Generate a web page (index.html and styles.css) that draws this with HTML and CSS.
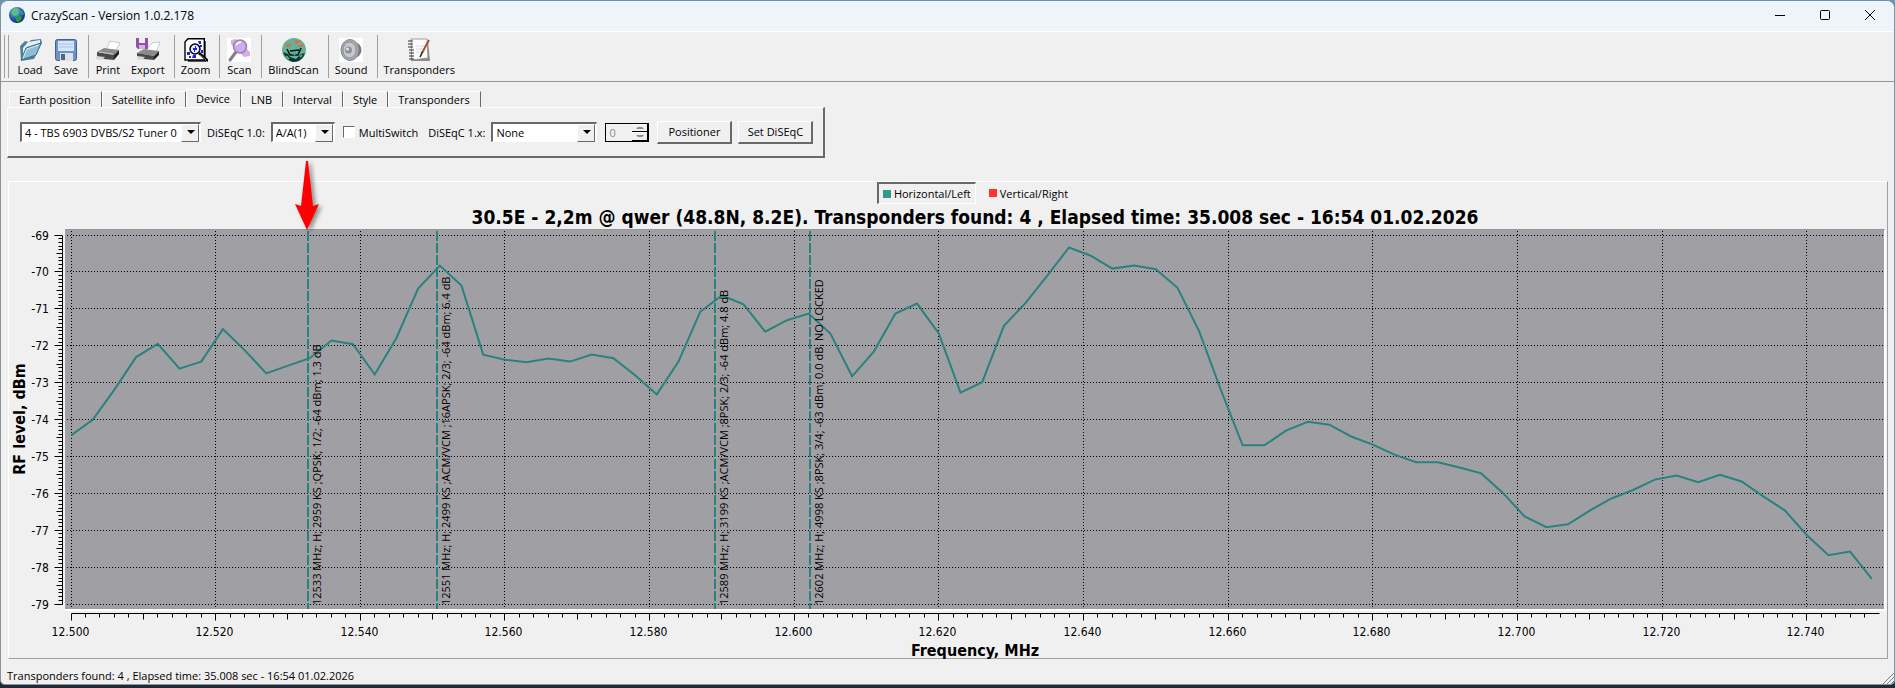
FILE: index.html
```html
<!DOCTYPE html>
<html lang="en">
<head>
    <meta charset="UTF-8">
    <meta name="viewport" content="width=device-width, initial-scale=1.0">
    <title>CrazyScan - Version 1.0.2.178</title>
    <link rel="stylesheet" href="styles.css">
</head>
<body>
<div class="window">
    <header class="titlebar">
        <svg class="app-icon" viewBox="0 0 16 16">
            <defs>
                <radialGradient id="globe" cx="0.4" cy="0.3" r="0.8">
                    <stop offset="0" stop-color="#7fd0ff"/>
                    <stop offset="0.5" stop-color="#2b62b8"/>
                    <stop offset="1" stop-color="#0a1f55"/>
                </radialGradient>
            </defs>
            <circle cx="8" cy="8" r="8" fill="url(#globe)"/>
            <path d="M2 5 Q4 1 8 1 L10 3 L8 5 L9 7 L6 9 L4 8 Z" fill="#5cc46a"/>
            <path d="M7 10 L11 9 L13 11 L10 15 L7 14 Z" fill="#2e9a3c"/>
            <path d="M12 3 L15 7 L13 8 L11 5 Z" fill="#3aa548"/>
        </svg>
        <span class="app-title">CrazyScan - Version 1.0.2.178</span>
        <div class="window-buttons">
            <button aria-label="Minimize"><svg viewBox="0 0 10 10"><path d="M0 5.5 H10"/></svg></button>
            <button aria-label="Maximize"><svg viewBox="0 0 10 10"><rect x="0.5" y="0.5" width="9" height="9" rx="1"/></svg></button>
            <button aria-label="Close"><svg viewBox="0 0 10 10"><path d="M0 0 L10 10 M10 0 L0 10"/></svg></button>
        </div>
    </header>

    <nav class="toolbar">
        <span class="grip"></span>
        <button>
            <svg viewBox="0 0 24 24">
                <path d="M2 8 L7 3 L11 4 L13 2 L23 1 L24 5 L16 21 L3 23 Z" fill="#4f8199"/>
                <path d="M5 10 L10 4 L22 2 L22 5 L9 9 L5 20 Z" fill="#e3f1f6"/>
                <path d="M3 22 L8 10 L23 5 L18 17 Z" fill="#8fbdd3" stroke="#3f7189"/>
                <path d="M5 20 L9 11 L21 7" fill="none" stroke="#d7ebf3"/>
            </svg>
            Load
        </button>
        <button>
            <svg viewBox="0 0 24 24">
                <rect x="1.5" y="1.5" width="21" height="21" rx="2" fill="#6a92cc" stroke="#4a5f86"/>
                <rect x="4" y="3" width="16" height="10" fill="#d6e6f8"/>
                <path d="M5 6 H19 M5 9 H19" stroke="#a9c4e6"/>
                <rect x="6" y="15" width="13" height="8" fill="#dfe3e8"/>
                <rect x="7" y="16" width="4" height="6" fill="#56657c"/>
            </svg>
            Save
        </button>
        <span class="separator"></span>
        <button>
            <svg viewBox="0 0 24 24">
                <path d="M10 12 L14 3 L24 5 L19 14 Z" fill="#fff" stroke="#aaa" stroke-width="0.6"/>
                <path d="M1 14 L8 10 L23 12 L18 17 Z" fill="#8b8b8b"/>
                <path d="M1 14 L18 17 L18 22 L8 21 L1 18 Z" fill="#4a4a4a"/>
                <path d="M18 17 L23 12 L23 16 L18 22 Z" fill="#222"/>
                <path d="M0 18 L9 19 L6 22 L0 21 Z" fill="#d5d9dc"/>
                <path d="M3 14 L17 16" stroke="#c9c9c9"/>
            </svg>
            Print
        </button>
        <button>
            <svg viewBox="0 0 24 24">
                <path d="M10 12 L16 5 L24 4 L20 14 Z" fill="#fff" stroke="#aaa" stroke-width="0.6"/>
                <path d="M1 15 L8 11 L23 13 L18 18 Z" fill="#8b8b8b"/>
                <path d="M1 15 L18 18 L18 22 L8 21 L1 19 Z" fill="#4a4a4a"/>
                <path d="M18 18 L23 13 L23 17 L18 22 Z" fill="#222"/>
                <path d="M1 18 L9 19 L6 22 L1 21 Z" fill="#d5d9dc"/>
                <path d="M0 0 H12 V11 H2 L0 9 Z" fill="#9350a8"/>
                <rect x="3" y="0" width="6" height="5" fill="#f4eaf8"/>
                <rect x="3" y="7" width="6" height="4" fill="#d3b4de"/>
            </svg>
            Export
        </button>
        <span class="separator"></span>
        <button>
            <svg viewBox="0 0 24 24">
                <path d="M4 3 H22 V24 H4 Z" fill="#555"/>
                <path d="M4 0.7 H20.3 V22 H1 V4 Z" fill="#fff" stroke="#000" stroke-width="1.4"/>
                <path d="M14 3 h3 v3 h-2 z M3 14 h3 v3 h-3 z M9 17 h3 v3 h-4 z M17 12 h2 v3 h-2 z M16 7 h2 v2 h-2 z M5 18 h2 v2 h-2 z" fill="#1d1df0"/>
                <circle cx="11" cy="11" r="5" fill="#e4ecff" stroke="#000" stroke-width="1.5"/>
                <path d="M9 10 h2 v-2 h1 v2 h1 v2 h-2 v2 h-1 v-2 h-1 z" fill="#1d1df0"/>
                <path d="M15 15 L24 23" stroke="#000" stroke-width="2.6"/>
                <path d="M16 17 L22 22" stroke="#999" stroke-width="0.8"/>
            </svg>
            Zoom
        </button>
        <span class="separator"></span>
        <button>
            <svg viewBox="0 0 24 24">
                <rect width="24" height="24" fill="#fff"/>
                <path d="M4 2 L9 1 L23 14 L23 18 L17 19 L4 6 Z" fill="#d9a9ec"/>
                <path d="M3 22 L9 14" stroke="#8b7890" stroke-width="3" stroke-linecap="round"/>
                <circle cx="13" cy="8.5" r="6.5" fill="#cfaaf0" stroke="#8f8c9c" stroke-width="1.6"/>
                <path d="M9 7 Q11 4 14 4" stroke="#fff" fill="none" stroke-width="1.4"/>
            </svg>
            Scan
        </button>
        <span class="separator"></span>
        <button>
            <svg viewBox="0 0 24 24">
                <circle cx="12" cy="12" r="12" fill="#63b39b"/>
                <path d="M1 14 Q4 22 11 24 Q20 24 23 15 L19 16 L14 21 L8 19 L6 16 Z" fill="#14332f"/>
                <path d="M3 7 L10 5 L8 8 L5 9 Z M12 3 L19 2 L17 5 L14 6 Z M14 8 L22 6 L20 9 Z" fill="#e06a42"/>
                <path d="M5 11 L8 17 H16 L19 10 M8 13 L17 12" stroke="#071412" stroke-width="1.6" fill="none"/>
                <path d="M10 15 L14 14 L13 18 Z" fill="#3fa9c9"/>
                <path d="M4 18 L7 21 M18 19 L20 17" stroke="#6fd06b" stroke-width="1.4"/>
            </svg>
            BlindScan
        </button>
        <span class="separator"></span>
        <button>
            <svg viewBox="0 0 24 24">
                <rect width="24" height="24" fill="#fff"/>
                <path d="M13 3 L20 6 Q25 12 20 18 L13 21 Z" fill="#77797d"/>
                <ellipse cx="11" cy="12" rx="9" ry="10.5" fill="#a5a8ad" stroke="#85878b"/>
                <ellipse cx="10.5" cy="12" rx="6.5" ry="8" fill="#c6c9cd" stroke="#8e9196"/>
                <circle cx="9.5" cy="12" r="3.5" fill="#8f9297"/>
                <circle cx="8.5" cy="11" r="1.5" fill="#e2e4e6"/>
            </svg>
            Sound
        </button>
        <span class="separator"></span>
        <button>
            <svg viewBox="0 0 24 24">
                <path d="M5 1 L21 3 L23 23 L4 23 Z" fill="#8b8b8b"/>
                <path d="M4 1 L20 1 L21 20 L5 22 Z" fill="#fbfbfb" stroke="#8a8a8a" stroke-width="0.8"/>
                <path d="M1 3 H6 M1 6 H6 M1 9 H6 M2 12 H7 M2 15 H7 M2 18 H7 M2 21 H7" stroke="#333" stroke-width="1.2"/>
                <path d="M9 8 H18 M9 11 H18 M9 14 H18" stroke="#dcdcdc"/>
                <path d="M22 2 L15 15" stroke="#a3542f" stroke-width="2"/>
                <path d="M15.5 14 L13 19" stroke="#222" stroke-width="1.6"/>
            </svg>
            Transponders
        </button>
    </nav>

    <section class="settings">
        <div class="tabs" role="tablist">
            <button role="tab">Earth position</button>
            <button role="tab">Satellite info</button>
            <button role="tab" aria-selected="true" class="active">Device</button>
            <button role="tab">LNB</button>
            <button role="tab">Interval</button>
            <button role="tab">Style</button>
            <button role="tab">Transponders</button>
        </div>
        <div class="tab-page" role="tabpanel">
            <span class="combo combo-tuner">
                <select aria-label="Tuner"><option>4 - TBS 6903 DVBS/S2 Tuner 0</option></select>
            </span>
            <label for="diseqc10">DiSEqC 1.0:</label>
            <span class="combo combo-port">
                <select id="diseqc10"><option>A/A(1)</option></select>
            </span>
            <label class="check"><input type="checkbox"> MultiSwitch</label>
            <label for="diseqc1x">DiSEqC 1.x:</label>
            <span class="combo combo-type">
                <select id="diseqc1x"><option>None</option></select>
            </span>
            <span class="spin">
                <input type="text" value="0" aria-label="Position" disabled>
                <span class="spin-buttons">
                    <button aria-label="Up" disabled></button>
                    <button aria-label="Down" disabled></button>
                </span>
            </span>
            <button class="push">Positioner</button>
            <button class="push">Set DiSEqC</button>
        </div>
    </section>

    <main class="chart">
        <div class="legend">
            <button class="pressed"><i class="swatch left"></i>Horizontal/Left</button>
            <button><i class="swatch right"></i>Vertical/Right</button>
        </div>
        <h1>30.5E - 2,2m @ qwer (48.8N, 8.2E). Transponders found: 4 , Elapsed time: 35.008 sec - 16:54 01.02.2026</h1>
        <div class="plot">
            <svg id="plot"></svg>
        </div>
    </main>

    <footer class="statusbar">
        <span>Transponders found: 4 , Elapsed time: 35.008 sec - 16:54 01.02.2026</span>
        <svg class="size-grip" viewBox="0 0 12 12"><path d="M1 12 L12 1 M5 12 L12 5 M9 12 L12 9"/></svg>
    </footer>
</div>
<script src="plot.js"></script>
</body>
</html>
```
FILE: styles.css
```css
* {
    box-sizing: border-box;
}
html, body {
    height: 100%;
}
body {
    margin: 0;
    padding-bottom: 3px;
    background: linear-gradient(to bottom, #6f93b0, #4d7a8c 60%, #1d2b36 98%);
    font-family: "Open Sans", sans-serif;
    font-size: 11px;
    color: #000;
}
button, select, input {
    font: inherit;
    color: inherit;
}
button {
    border: 0;
    padding: 0;
    background: none;
}

.window {
    display: flex;
    flex-direction: column;
    height: 100%;
    border: 1px solid #8b9299;
    border-top-color: #6c8fab;
    border-radius: 8px 8px 5px 5px;
    background: #f0f0f0;
    overflow: hidden;
}

/* title bar */
.titlebar {
    display: flex;
    align-items: center;
    flex: none;
    height: 31px;
    padding: 0 2px 2px 8px;
    background: #eef5fa;
    border-bottom: 1px solid #fff;
    font-size: 12px;
}
.app-icon {
    width: 16px;
    height: 16px;
    margin-right: 6px;
}
.window-buttons {
    display: flex;
    margin-left: auto;
}
.window-buttons button {
    width: 45px;
    height: 28px;
}
.window-buttons svg {
    width: 10px;
    height: 10px;
    fill: none;
    stroke: #000;
    overflow: visible;
}

/* toolbar */
.toolbar {
    display: flex;
    flex: none;
    height: 50px;
    padding: 3px 0 3px 3px;
    border-bottom: 1px solid #919b9b;
}
.toolbar button {
    display: flex;
    flex-direction: column;
    align-items: center;
    min-width: 36px;
    padding: 3px 5px 0;
    line-height: 16px;
}
.toolbar button svg {
    width: 24px;
    height: 24px;
}
.grip {
    width: 5px;
    margin-right: 3px;
    border: 1px solid #a0a0a0;
    border-width: 0 1px;
}
.separator {
    width: 1px;
    margin: 0 1px 0 4px;
    background: #a0a0a0;
}

/* tabbed settings */
.settings {
    flex: none;
    align-self: flex-start;
    margin: 7px 0 0 6px;
}
.tabs {
    display: flex;
    align-items: flex-end;
    height: 18px;
    padding-left: 2px;
}
.tabs button {
    height: 16px;
    padding: 0 10px 0 9px;
    border-top: 1px solid #fff;
    border-left: 1px solid #fff;
    border-right: 1px solid #696969;
    line-height: 16px;
}
.tabs .active {
    height: 18px;
    line-height: 16px;
}
.tab-page {
    display: flex;
    align-items: center;
    height: 51px;
    padding: 0 10px 0 12px;
    border: 1px solid #fff;
    border-right: 2px solid #696969;
    border-bottom: 2px solid #696969;
}
.tab-page label {
    margin: 0 6px;
}
.combo {
    position: relative;
    height: 20px;
}
.combo select {
    appearance: none;
    width: 100%;
    height: 100%;
    padding: 0 3px;
    border: 2px solid #696969;
    border-right: 1px solid #fff;
    border-bottom: 1px solid #fff;
    border-radius: 0;
    background: #fff;
}
.combo::before {
    content: "";
    position: absolute;
    top: 2px;
    right: 2px;
    width: 16px;
    height: 16px;
    background: #f0f0f0;
    border: 1px solid #fff;
    border-right: 1px solid #696969;
    border-bottom: 1px solid #696969;
}
.combo::after {
    content: "";
    position: absolute;
    top: 8px;
    right: 6px;
    border: 4px solid transparent;
    border-top-color: #000;
    border-bottom: 0;
}
.combo-tuner {
    width: 181px;
}
.combo-port {
    width: 64px;
}
.combo-type {
    width: 106px;
}
.tab-page .check {
    display: flex;
    align-items: center;
    margin: 0 4px 0 8px;
}
.check input {
    appearance: none;
    width: 12px;
    height: 12px;
    margin: 0 4px 0 0;
    border: 1px solid #696969;
    border-right-color: #fff;
    border-bottom-color: #fff;
    background: #fff;
}
.spin {
    display: flex;
    width: 44px;
    height: 19px;
    margin: 0 8px;
    border: 1px solid #000;
    border-right: 2px solid #000;
}
.spin input {
    width: 26px;
    padding: 0 3px;
    border: 0;
    background: #f0f0f0;
    color: #8d8d8d;
}
.spin-buttons {
    display: flex;
    flex-direction: column;
    flex: 1;
}
.spin-buttons button {
    flex: 1;
    border-bottom: 1px solid #000;
    border-top: 1px solid #fff;
}
.spin-buttons button::before {
    content: "";
    display: block;
    width: 4px;
    margin: auto;
    border: 2px solid transparent;
    border-top: 0;
    border-bottom-color: #8d8d8d;
}
.spin-buttons button:last-child::before {
    border-top: 2px solid #8d8d8d;
    border-bottom: 0;
}
.push {
    width: 75px;
    height: 23px;
    border: 1px solid #fff;
    border-right: 2px solid #696969;
    border-bottom: 2px solid #696969;
}
.push + .push {
    margin-left: 6px;
}

/* spectrum */
.chart {
    display: flex;
    flex-direction: column;
    flex: 1;
    min-height: 0;
    margin: 23px 6px 0 7px;
    border: 1px solid #fff;
    border-right-color: #a0a0a0;
    border-bottom-color: #a0a0a0;
}
.legend {
    display: flex;
    justify-content: center;
    height: 22px;
    padding-left: 54px;
}
.legend button {
    display: flex;
    align-items: center;
    height: 22px;
    padding: 0 4px;
    border: 1px solid transparent;
}
.legend button + button {
    margin-left: 8px;
}
.legend .pressed {
    border: 2px solid #696969;
    border-right: 1px solid #fff;
    border-bottom: 1px solid #fff;
}
.swatch {
    width: 8px;
    height: 8px;
    margin-right: 3px;
}
.swatch.left {
    background: #339990;
}
.swatch.right {
    background: #fb3434;
}
h1 {
    height: 25px;
    margin: 0;
    padding-left: 54px;
    font-family: "DejaVu Sans Condensed", "DejaVu Sans", sans-serif;
    font-size: 19px;
    line-height: 26px;
    text-align: center;
    white-space: nowrap;
}
.plot {
    flex: 1;
    min-height: 0;
}
.plot svg {
    display: block;
    width: 100%;
    height: 100%;
    overflow: visible;
}
.plot text {
    font-family: "DejaVu Sans Condensed", "DejaVu Sans", sans-serif;
    font-size: 12px;
}
.plot .axis-title {
    font-size: 16px;
    font-weight: bold;
}
.plot .marker-label {
    font-family: "Open Sans", sans-serif;
    font-size: 11px;
}
.area {
    fill: #a09fa4;
}
.edge {
    stroke: #fff;
    stroke-width: 2;
}
.edge-dark {
    stroke: #969696;
}
.grid {
    stroke: #000;
    stroke-dasharray: 1 2;
}
.axis {
    stroke: #000;
}
.series {
    fill: none;
    stroke: #2a827f;
    stroke-width: 2;
}
.marker {
    stroke: #2a827f;
    stroke-width: 2;
    stroke-dasharray: 10 2;
}
.arrow {
    fill: #f00;
    filter: drop-shadow(3px 2px 2px rgba(0, 0, 0, 0.4));
}

.statusbar {
    display: flex;
    align-items: center;
    justify-content: space-between;
    flex: none;
    height: 25px;
    padding: 7px 0 0 6px;
}
.size-grip {
    align-self: flex-end;
    width: 12px;
    height: 12px;
    stroke: #808080;
}
```
FILE: plot.js
```js
// level in dBm, one sample every 3 MHz
const START = 12500;
const END = 12750;
const STEP = 3;
const levels = [
    -74.43, -74.01, -73.19, -72.31, -71.95, -72.62, -72.43, -71.55, -72.12, -72.75,
    -72.54, -72.34, -71.86, -71.96, -72.78, -71.79, -70.45, -69.83, -70.37, -72.24,
    -72.38, -72.45, -72.35, -72.43, -72.24, -72.34, -72.80, -73.32, -72.43, -71.08,
    -70.64, -70.88, -71.62, -71.31, -71.13, -71.67, -72.83, -72.16, -71.13, -70.86,
    -71.67, -73.27, -72.99, -71.46, -70.84, -70.10, -69.34, -69.56, -69.91, -69.83,
    -69.93, -70.43, -71.61, -73.20, -74.70, -74.70, -74.30, -74.06, -74.14, -74.46,
    -74.68, -74.95, -75.16, -75.16, -75.30, -75.46, -75.99, -76.63, -76.92, -76.84,
    -76.47, -76.14, -75.91, -75.63, -75.52, -75.70, -75.50, -75.68, -76.08, -76.47,
    -77.13, -77.68, -77.58, -78.32
];
const markers = [
    { freq: 12532.8, text: '12533 MHz; H; 2959 KS ;QPSK; 1/2; -64 dBm; 1.3 dB' },
    { freq: 12550.6, text: '12551 MHz; H; 2499 KS ;ACM/VCM ;16APSK; 2/3; -64 dBm; 6.4 dB' },
    { freq: 12589, text: '12589 MHz; H; 3199 KS ;ACM/VCM ;8PSK; 2/3; -64 dBm; 4.8 dB' },
    { freq: 12602.2, text: '12602 MHz; H; 4998 KS ;8PSK; 3/4; -63 dBm; 0.0 dB, NO LOCKED' }
];

const svg = document.getElementById('plot');

function draw() {
    const w = svg.clientWidth;
    const h = svg.clientHeight;
    const left = 56;
    const right = w - 2;
    const bottom = h - 49;
    const px = f => 62 + (f - START) / (END - START) * (w - 70);
    const py = v => 6 + (-69 - v) / 10 * (bottom - 11);
    const snap = n => Math.floor(n) + 0.5;
    const line = (cls, x1, y1, x2, y2) => `<line class="${cls}" x1="${x1}" y1="${y1}" x2="${x2}" y2="${y2}"/>`;
    let out = `<rect class="area" x="${left}" y="0" width="${right - left}" height="${bottom}"/>`;
    out += line('edge', left, bottom + 1, right + 1, bottom + 1);
    out += line('edge', right, 0, right, bottom + 2);
    out += line('edge-dark', left, 0.5, right, 0.5);

    // horizontal grid, level scale
    const axisX = 53.5;
    out += line('axis', axisX, snap(py(-69)), axisX, snap(py(-79)));
    for (let i = 0; i <= 100; i++) {
        const y = snap(py(-69 - i / 10));
        const len = i % 10 === 0 ? 8 : i % 5 === 0 ? 6 : 4;
        out += line('axis', axisX - len, y, axisX, y);
        if (i % 10 === 0) {
            out += line('grid', left + 2, y, right, y);
            out += `<text x="40" y="${y + 4}" text-anchor="end">${-69 - i / 10}</text>`;
        }
    }

    // vertical grid, frequency scale
    const axisY = bottom + 4.5;
    out += line('axis', snap(px(START)), axisY, snap(px(END)), axisY);
    for (let f = START; f < END; f += 2) {
        const x = snap(px(f));
        const major = (f - START) % 20 === 0;
        const len = major ? 7 : (f - START) % 10 === 0 ? 6 : 4;
        out += line('axis', x, axisY, x, axisY + len);
        if (major) {
            out += line('grid', x, 2, x, bottom - 2);
            out += `<text x="${x - 1}" y="${bottom + 27}" text-anchor="middle">${(f / 1000).toFixed(3)}</text>`;
        }
    }

    const points = levels.map((v, i) => px(START + i * STEP).toFixed(1) + ',' + py(v).toFixed(1));
    out += `<polyline class="series" points="${points.join(' ')}"/>`;

    for (const m of markers) {
        const x = Math.round(px(m.freq));
        out += line('marker', x, 2, x, bottom);
        out += `<text class="marker-label" transform="translate(${x + 13} ${bottom - 4}) rotate(-90)">${m.text}</text>`;
    }

    // pointer to the first transponder
    const ax = Math.round(px(markers[0].freq));
    out += `<path class="arrow" transform="translate(${ax - 1} 1)" d="M0 0 L12 -26 L6 -24 L1 -69 L-1 -69 L-6 -24 L-12 -26 Z"/>`;

    out += `<text class="axis-title" x="${(left + right) / 2}" y="${h - 2}" text-anchor="middle">Frequency, MHz</text>`;
    out += `<text class="axis-title" transform="translate(16 ${bottom / 2}) rotate(-90)" text-anchor="middle">RF level, dBm</text>`;
    svg.innerHTML = out;
}

draw();
window.addEventListener('resize', draw);
```
